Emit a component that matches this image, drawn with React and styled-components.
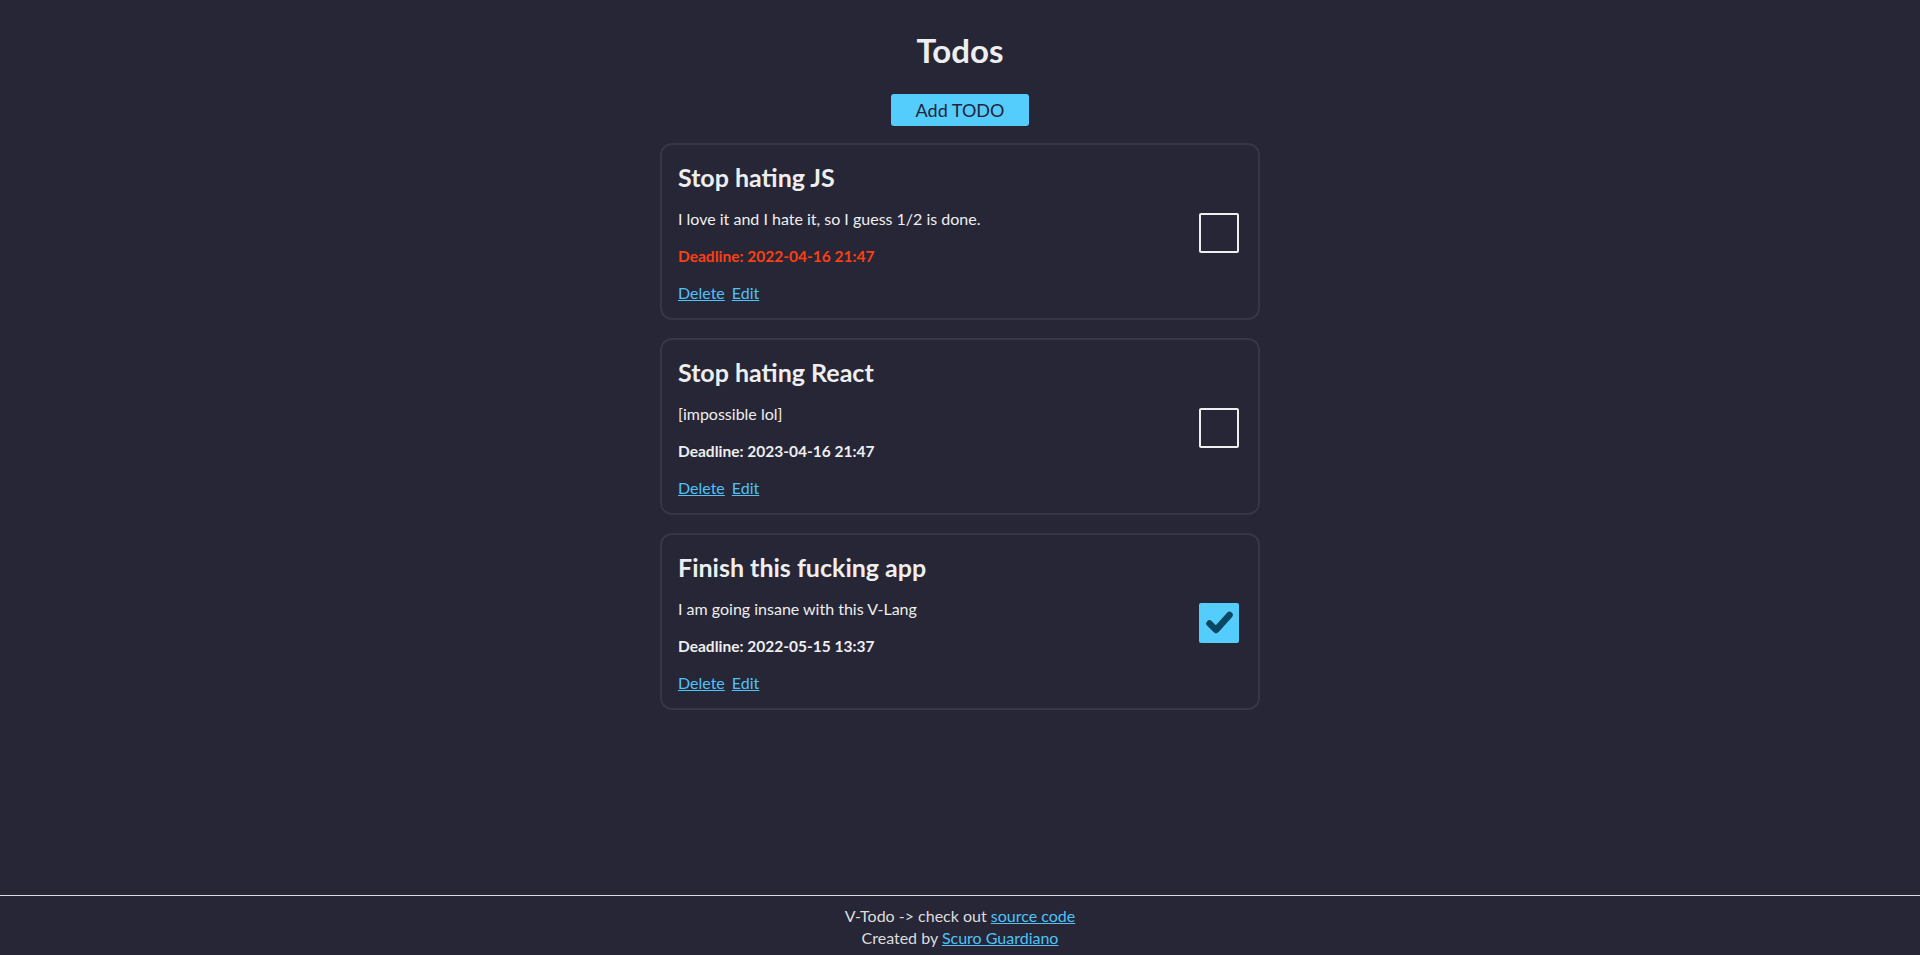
import React, { useState } from "react";
import styled, { createGlobalStyle } from "styled-components";

const GlobalStyle = createGlobalStyle`
  *, *::before, *::after { box-sizing: border-box; }
  html, body { margin: 0; padding: 0; }
  body {
    background: #262637;
    color: #eeeeee;
    font-family: Lato, "Open Sans", sans-serif;
    font-size: 16px;
  }
`;

const Page = styled.div`
  min-height: 100vh;
  display: flex;
  flex-direction: column;
`;

const Main = styled.main`
  flex: 1;
  display: flex;
  flex-direction: column;
  align-items: center;
  padding-top: 30px;
`;

const Title = styled.h1`
  margin: 0;
  font-size: 33px;
  line-height: 40px;
  font-weight: 700;
  color: #eeeeee;
`;

const AddButton = styled.button`
  margin-top: 24px;
  width: 138px;
  height: 32px;
  border: none;
  border-radius: 3px;
  background: #55cdfc;
  color: #23233a;
  font-family: Lato, "Open Sans", sans-serif;
  font-size: 18px;
  padding: 0;
  cursor: pointer;
`;

const List = styled.div`
  margin-top: 17px;
  display: flex;
  flex-direction: column;
  gap: 18px;
`;

const Card = styled.div`
  width: 600px;
  border: 2px solid #363649;
  border-radius: 12px;
  padding: 17px 19px 14px 16px;
  display: grid;
  grid-template-columns: 1fr auto;
  align-items: center;
`;

const Body = styled.div`
  display: flex;
  flex-direction: column;
`;

const CardTitle = styled.h2`
  margin: 0;
  font-size: 25px;
  line-height: 30px;
  font-weight: 700;
  color: #eeeeee;
`;

const Description = styled.p`
  margin: 16px 0 0;
  font-size: 16px;
  line-height: 22px;
  color: #eeeeee;
`;

const Deadline = styled.p`
  margin: 15px 0 0;
  font-size: 15.5px;
  line-height: 22px;
  font-weight: 700;
  color: ${(p) => (p.$overdue ? "#fb3f14" : "#eeeeee")};
`;

const Actions = styled.div`
  margin-top: 15px;
  display: flex;
  gap: 7px;
  font-size: 16px;
  line-height: 22px;
`;

const LinkA = styled.a`
  color: #4fc3f7;
  text-decoration: underline;
  cursor: pointer;
`;

const CheckBox = styled.button`
  width: 40px;
  height: 40px;
  padding: 0;
  border-radius: 2px;
  border: ${(p) => (p.$checked ? "none" : "2px solid #eeeeee")};
  background: ${(p) => (p.$checked ? "#55cdfc" : "transparent")};
  display: flex;
  align-items: center;
  justify-content: center;
  cursor: pointer;
`;

const Footer = styled.footer`
  border-top: 1px solid #dcdcdc;
  padding: 9px 0 7px;
  text-align: center;
  font-size: 16px;
  line-height: 21.5px;
  color: #dddddd;
`;

const FooterLine = styled.div``;

const CheckMark = () => (
  <svg width="40" height="40" viewBox="0 0 40 40">
    <polyline
      points="10.5,20.5 17,27 30.5,12"
      fill="none"
      stroke="#0b4763"
      strokeWidth="6.5"
      strokeLinecap="round"
      strokeLinejoin="round"
    />
  </svg>
);

const initial = [
  {
    id: 1,
    title: "Stop hating JS",
    description: "I love it and I hate it, so I guess 1/2 is done.",
    deadline: "2022-04-16 21:47",
    overdue: true,
    done: false,
  },
  {
    id: 2,
    title: "Stop hating React",
    description: "[impossible lol]",
    deadline: "2023-04-16 21:47",
    overdue: false,
    done: false,
  },
  {
    id: 3,
    title: "Finish this fucking app",
    description: "I am going insane with this V-Lang",
    deadline: "2022-05-15 13:37",
    overdue: false,
    done: true,
  },
];

export default function App() {
  const [todos, setTodos] = useState(initial);
  const toggle = (id) =>
    setTodos((ts) => ts.map((t) => (t.id === id ? { ...t, done: !t.done } : t)));

  return (
    <>
      <GlobalStyle />
      <Page>
        <Main>
          <Title>Todos</Title>
          <AddButton>Add TODO</AddButton>
          <List>
            {todos.map((t) => (
              <Card key={t.id}>
                <Body>
                  <CardTitle>{t.title}</CardTitle>
                  <Description>{t.description}</Description>
                  <Deadline $overdue={t.overdue}>Deadline: {t.deadline}</Deadline>
                  <Actions>
                    <LinkA>Delete</LinkA>
                    <LinkA>Edit</LinkA>
                  </Actions>
                </Body>
                <CheckBox $checked={t.done} onClick={() => toggle(t.id)}>
                  {t.done && <CheckMark />}
                </CheckBox>
              </Card>
            ))}
          </List>
        </Main>
        <Footer>
          <FooterLine>
            V-Todo -&gt; check out <LinkA>source code</LinkA>
          </FooterLine>
          <FooterLine>
            Created by <LinkA>Scuro Guardiano</LinkA>
          </FooterLine>
        </Footer>
      </Page>
    </>
  );
}
